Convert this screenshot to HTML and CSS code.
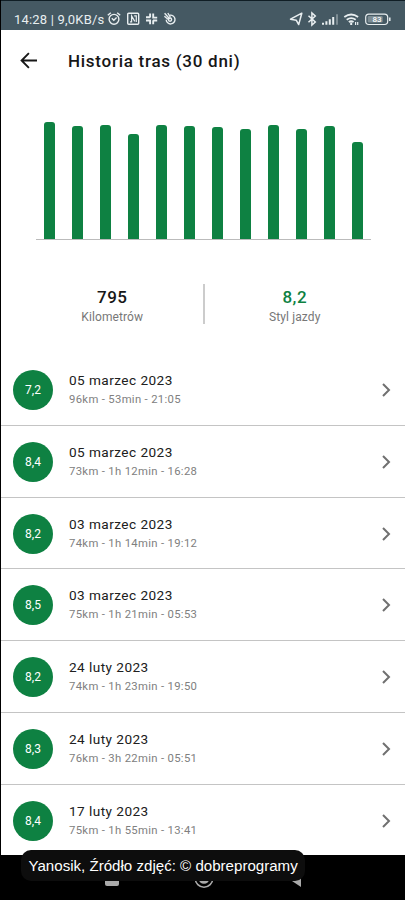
FILE: index.html
```html
<!DOCTYPE html>
<html lang="pl">
<head>
<meta charset="utf-8">
<title>Historia tras</title>
<link rel="stylesheet" href="styles.css">
</head>
<body>
<div class="phone">
  <div class="status">
    <span class="clock">14:28 | 9,0KB/s</span>
    <svg class="status-left" width="72" height="16" viewBox="0 0 72 16" fill="none" stroke="currentColor" stroke-width="1.4">
      <circle cx="8" cy="8.3" r="4.9"/><path d="M1.8 4.3l3-2.6M14.2 4.3l-3-2.6M5.8 7.2l2 2 2.8-2.6"/>
      <rect x="21.7" y="2.3" width="11" height="11" rx="1"/><path stroke-width="1.2" d="M24 10.9h1.6V5l3.2 5.4M28.2 4.9h2.1v6"/>
      <path stroke-width="1.9" d="M44.1 2.5v4.1M40 6.2h4.2M47.2 2.5v4.1h4M51.2 9.5H47M47.2 13.3V9.3M44.1 13.3V9.5H40"/>
      <path d="M63.8 4.2a4.4 4.4 0 1 1-3.6 4.5"/><circle cx="64" cy="8.6" r="1.6"/><path d="M58.6 2.2l5.2 5.8M58.4 5.3l3.6 3M61.8 2l2.7 4.5"/>
    </svg>
    <svg class="status-right" width="102" height="16" viewBox="0 0 102 16" fill="none" stroke="currentColor" stroke-width="1.5">
      <path d="M.5 8.2L11.8 2.2 8.7 13.6 6.2 9.2z" stroke-linejoin="round"/>
      <path d="M18.5 4.7l6.8 6.3-3.4 3V2L25.3 5l-6.8 6.3"/>
      <path stroke-width="2" d="M33 11.8v2M36.4 10.3v3.5M39.8 8.3v5.5M43.2 6v7.8"/><path stroke-width="2" opacity=".35" d="M47 3.3v10.5"/>
      <path stroke-width="1.8" d="M54.3 6q6.9-5 13.8 0M56.7 8.7q4.5-3.3 9 0M58.8 11q2.4-1.5 4.8 0"/><path d="M61.2 11.5v2.5" stroke-width="2"/><path d="M65.6 11v3M67.7 11v3" stroke-width="1.2"/>
      <rect x="75.7" y="3.1" width="22" height="10.4" rx="3.2" stroke-width="1.2"/><rect x="77.7" y="5" width="15" height="6.6" rx="1.3" fill="#7d8d94" stroke="none"/><path d="M99.8 6.6v3.4" stroke-width="1.5"/>
      <text class="battery" x="87" y="11.2" text-anchor="middle">83</text>
    </svg>
  </div>
  <header class="appbar">
    <svg width="18" height="18" viewBox="0 0 18 18" fill="none" stroke="currentColor" stroke-width="1.9"><path d="M17 8.5H1.9M8.9 1.2L1.6 8.5l7.3 7.3"/></svg>
    <h1>Historia tras (30 dni)</h1>
  </header>
  <div class="chart">
    <i class="bar h117"></i><i class="bar h113"></i><i class="bar h114"></i><i class="bar h105"></i><i class="bar h114"></i><i class="bar h113"></i><i class="bar h112"></i><i class="bar h110"></i><i class="bar h114"></i><i class="bar h110"></i><i class="bar h113"></i><i class="bar h97"></i>
  </div>
  <div class="stats">
    <div class="stat"><b>795</b><span>Kilometrów</span></div>
    <div class="divider"></div>
    <div class="stat good"><b>8,2</b><span>Styl jazdy</span></div>
  </div>
  <main class="routes">
    <div class="route"><div class="score">7,2</div><div class="info"><p class="date">05 marzec 2023</p><p class="detail">96km - 53min - 21:05</p></div><svg class="chevron" viewBox="0 0 9 14"><path d="M1 1l6 6-6 6"/></svg></div>
    <div class="route"><div class="score">8,4</div><div class="info"><p class="date">05 marzec 2023</p><p class="detail">73km - 1h 12min - 16:28</p></div><svg class="chevron" viewBox="0 0 9 14"><path d="M1 1l6 6-6 6"/></svg></div>
    <div class="route"><div class="score">8,2</div><div class="info"><p class="date">03 marzec 2023</p><p class="detail">74km - 1h 14min - 19:12</p></div><svg class="chevron" viewBox="0 0 9 14"><path d="M1 1l6 6-6 6"/></svg></div>
    <div class="route"><div class="score">8,5</div><div class="info"><p class="date">03 marzec 2023</p><p class="detail">75km - 1h 21min - 05:53</p></div><svg class="chevron" viewBox="0 0 9 14"><path d="M1 1l6 6-6 6"/></svg></div>
    <div class="route"><div class="score">8,2</div><div class="info"><p class="date">24 luty 2023</p><p class="detail">74km - 1h 23min - 19:50</p></div><svg class="chevron" viewBox="0 0 9 14"><path d="M1 1l6 6-6 6"/></svg></div>
    <div class="route"><div class="score">8,3</div><div class="info"><p class="date">24 luty 2023</p><p class="detail">76km - 3h 22min - 05:51</p></div><svg class="chevron" viewBox="0 0 9 14"><path d="M1 1l6 6-6 6"/></svg></div>
    <div class="route"><div class="score">8,4</div><div class="info"><p class="date">17 luty 2023</p><p class="detail">75km - 1h 55min - 13:41</p></div><svg class="chevron" viewBox="0 0 9 14"><path d="M1 1l6 6-6 6"/></svg></div>
  </main>
  <footer class="nav">
    <svg width="405" height="45" viewBox="0 0 405 45"><rect x="105" y="17" width="14" height="14" rx="2" fill="#aaa"/><circle cx="204" cy="23.5" r="8.7" fill="none" stroke="#aaa" stroke-width="1.6"/><circle cx="204" cy="23.5" r="5.3" fill="#aaa"/><path d="M301 16v16l-12-8z" fill="#aaa"/></svg>
    <div class="caption">Yanosik, Źródło zdjęć: © dobreprogramy</div>
  </footer>
</div>
</body>
</html>
```
FILE: styles.css
```css
* { box-sizing: border-box; }
body { margin: 0; background: #000; font-family: Roboto, sans-serif; }
.phone { width: 405px; height: 900px; overflow: hidden; background: #fff; border-left: 1px solid #000; }
.status { height: 30px; padding: 8px 13px 0; display: flex; background: #455963; border-top: 1px solid #101e25; color: #e8eef0; }
.clock { font-size: 13px; line-height: 21px; letter-spacing: .2px; width: 92px; white-space: nowrap; }
.status-left { margin-top: 2px; }
.status-right { margin: 2px 0 0 auto; overflow: visible; }
.battery { font: 500 8px Roboto, sans-serif; fill: #fff; stroke: none; }
.appbar { height: 61px; display: flex; align-items: center; padding-left: 19px; color: #171717; }
.appbar h1 { margin: 0 0 0 30px; font-size: 17px; font-weight: 500; letter-spacing: .73px; }
.chart { height: 149px; margin: 0 34px 0 35px; padding: 0 8px; display: flex; align-items: flex-end; justify-content: space-between; border-bottom: 1px solid #bbb; }
.bar { width: 11px; border-radius: 3px 3px 0 0; background: #0e8142; }
.h117 { height: 117px; }
.h114 { height: 114px; }
.h113 { height: 113px; }
.h112 { height: 112px; }
.h110 { height: 110px; }
.h105 { height: 105px; }
.h97 { height: 97px; }
.stats { display: flex; height: 114px; padding: 44px 20px 0 21px; }
.stat { flex: 1; text-align: center; color: #171717; }
.stat b { display: block; font-size: 17px; line-height: 24px; font-weight: 500; letter-spacing: .5px; margin-top: 1px; }
.stat span { display: block; color: #777; font-size: 12px; line-height: 16px; letter-spacing: .1px; }
.good b { color: #0e8142; }
.divider { width: 2px; height: 40px; background: #ccc; }
.routes { height: 501px; overflow: hidden; }
.route { height: 71.8px; display: flex; align-items: center; padding: 1.4px 14px 0 12px; border-bottom: 1px solid #c4c4c4; }
.route:last-child { border: 0; height: 70.8px; }
.score { width: 40px; height: 40px; border-radius: 50%; background: #0e8142; color: #fff; text-align: center; font-size: 12px; line-height: 41px; }
.info { flex: 1; margin: -1px 0 0 16px; }
.info p { margin: 0; }
.date { font-size: 13.6px; line-height: 20px; letter-spacing: .45px; color: #202020; }
.detail { font-size: 11.3px; line-height: 19px; letter-spacing: .32px; color: #808080; }
.chevron { width: 9px; height: 14px; fill: none; stroke: #707070; stroke-width: 2; }
.nav { position: relative; height: 45px; margin-left: -1px; background: #000; }
.nav svg { display: block; }
.caption { position: absolute; left: 21px; top: -5px; width: 284px; height: 31px; border-radius: 10px; background: #0d0d0d; color: #fff; font: 15.1px/32px "Liberation Sans", sans-serif; padding-left: 7.5px; white-space: nowrap; }
```
